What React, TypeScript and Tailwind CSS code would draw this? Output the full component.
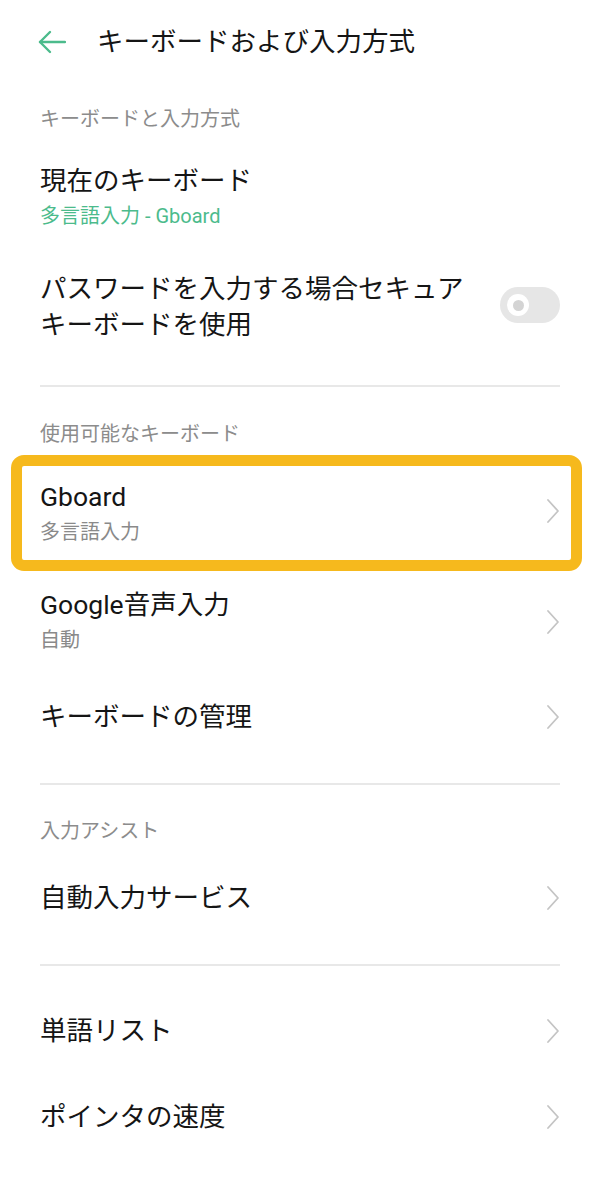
import React from 'react';

const font = { fontFamily: 'Roboto, "Noto Sans CJK JP", sans-serif' };

function Chevron() {
  return (
    <svg width="14" height="26" viewBox="0 0 14 26" fill="none" className="shrink-0">
      <polyline points="2,2 12,13 2,24" stroke="#c4c4c4" strokeWidth="1.8" strokeLinecap="round" strokeLinejoin="round" />
    </svg>
  );
}

function Divider({ className }: { className: string }) {
  return <div className={`mx-[40px] h-[2px] bg-[#e8e8e8] ${className}`} />;
}

function Row({ title, sub, className }: { title: string; sub?: string; className: string }) {
  return (
    <div className={`flex items-center justify-between pl-[40px] pr-[40px] ${className}`}>
      <div className="flex flex-col">
        <span className="text-[26.5px] leading-[36px] text-[#151515]">{title}</span>
        {sub && <span className="text-[20px] leading-[34px] text-[#8a8a8a]">{sub}</span>}
      </div>
      <Chevron />
    </div>
  );
}

export default function App() {
  return (
    <div className="w-[600px] h-[1179px] bg-white overflow-hidden" style={font}>
      {/* Header */}
      <div className="h-[84px] flex items-center pl-[38px]">
        <svg width="28" height="24" viewBox="0 0 28 24" fill="none">
          <line x1="2" y1="12" x2="27" y2="12" stroke="#4cbb8c" strokeWidth="2.4" strokeLinecap="round" />
          <polyline points="12,2 2,12 12,22" stroke="#4cbb8c" strokeWidth="2.4" strokeLinecap="round" strokeLinejoin="round" />
        </svg>
        <span className="ml-[31px] text-[26.5px] leading-[36px] text-[#151515]">キーボードおよび入力方式</span>
      </div>

      {/* Section: keyboard and input */}
      <div className="pt-[20px] pl-[40px] text-[20px] leading-[30px] text-[#8c8c8c]">キーボードと入力方式</div>

      <div className="mt-[29px] pl-[40px] flex flex-col">
        <span className="text-[26.5px] leading-[36px] text-[#151515]">現在のキーボード</span>
        <span className="text-[20px] leading-[34px] text-[#4cbb8c]">多言語入力 - Gboard</span>
      </div>

      <div className="mt-[38px] pl-[40px] pr-[40px] flex items-center justify-between">
        <span className="text-[26.5px] leading-[36px] text-[#151515]">
          パスワードを入力する場合セキュア
          <br />
          キーボードを使用
        </span>
        <div className="relative w-[60px] h-[36px] rounded-full bg-[#e6e6e6] shrink-0 -mt-[4px]">
          <div className="absolute left-[7px] top-[7px] w-[22px] h-[22px] rounded-full bg-white flex items-center justify-center">
            <div className="w-[11px] h-[11px] rounded-full bg-[#d4d4d4]" />
          </div>
        </div>
      </div>

      <Divider className="mt-[42px]" />

      {/* Section: available keyboards */}
      <div className="mt-[32px] pl-[40px] text-[20px] leading-[30px] text-[#8c8c8c]">使用可能なキーボード</div>

      <div className="mt-[6px] ml-[11px] mr-[18px] border-[11px] border-[#f6b91d] rounded-[13px]">
        <div className="flex items-center justify-between pl-[18px] pr-[11px] pt-[13px] pb-[11px]">
          <div className="flex flex-col">
            <span className="text-[26.5px] leading-[36px] text-[#151515]">Gboard</span>
            <span className="text-[20px] leading-[34px] text-[#8a8a8a]">多言語入力</span>
          </div>
          <div className="-mt-[6px]">
            <Chevron />
          </div>
        </div>
      </div>

      <Row title="Google音声入力" sub="自動" className="mt-[16px]" />
      <Row title="キーボードの管理" className="mt-[42px]" />

      <Divider className="mt-[48px]" />

      {/* Section: input assist */}
      <div className="mt-[31px] pl-[40px] text-[20px] leading-[30px] text-[#8c8c8c]">入力アシスト</div>
      <Row title="自動入力サービス" className="mt-[34px]" />

      <Divider className="mt-[48px]" />

      <Row title="単語リスト" className="mt-[47px]" />
      <Row title="ポインタの速度" className="mt-[50px]" />
    </div>
  );
}
